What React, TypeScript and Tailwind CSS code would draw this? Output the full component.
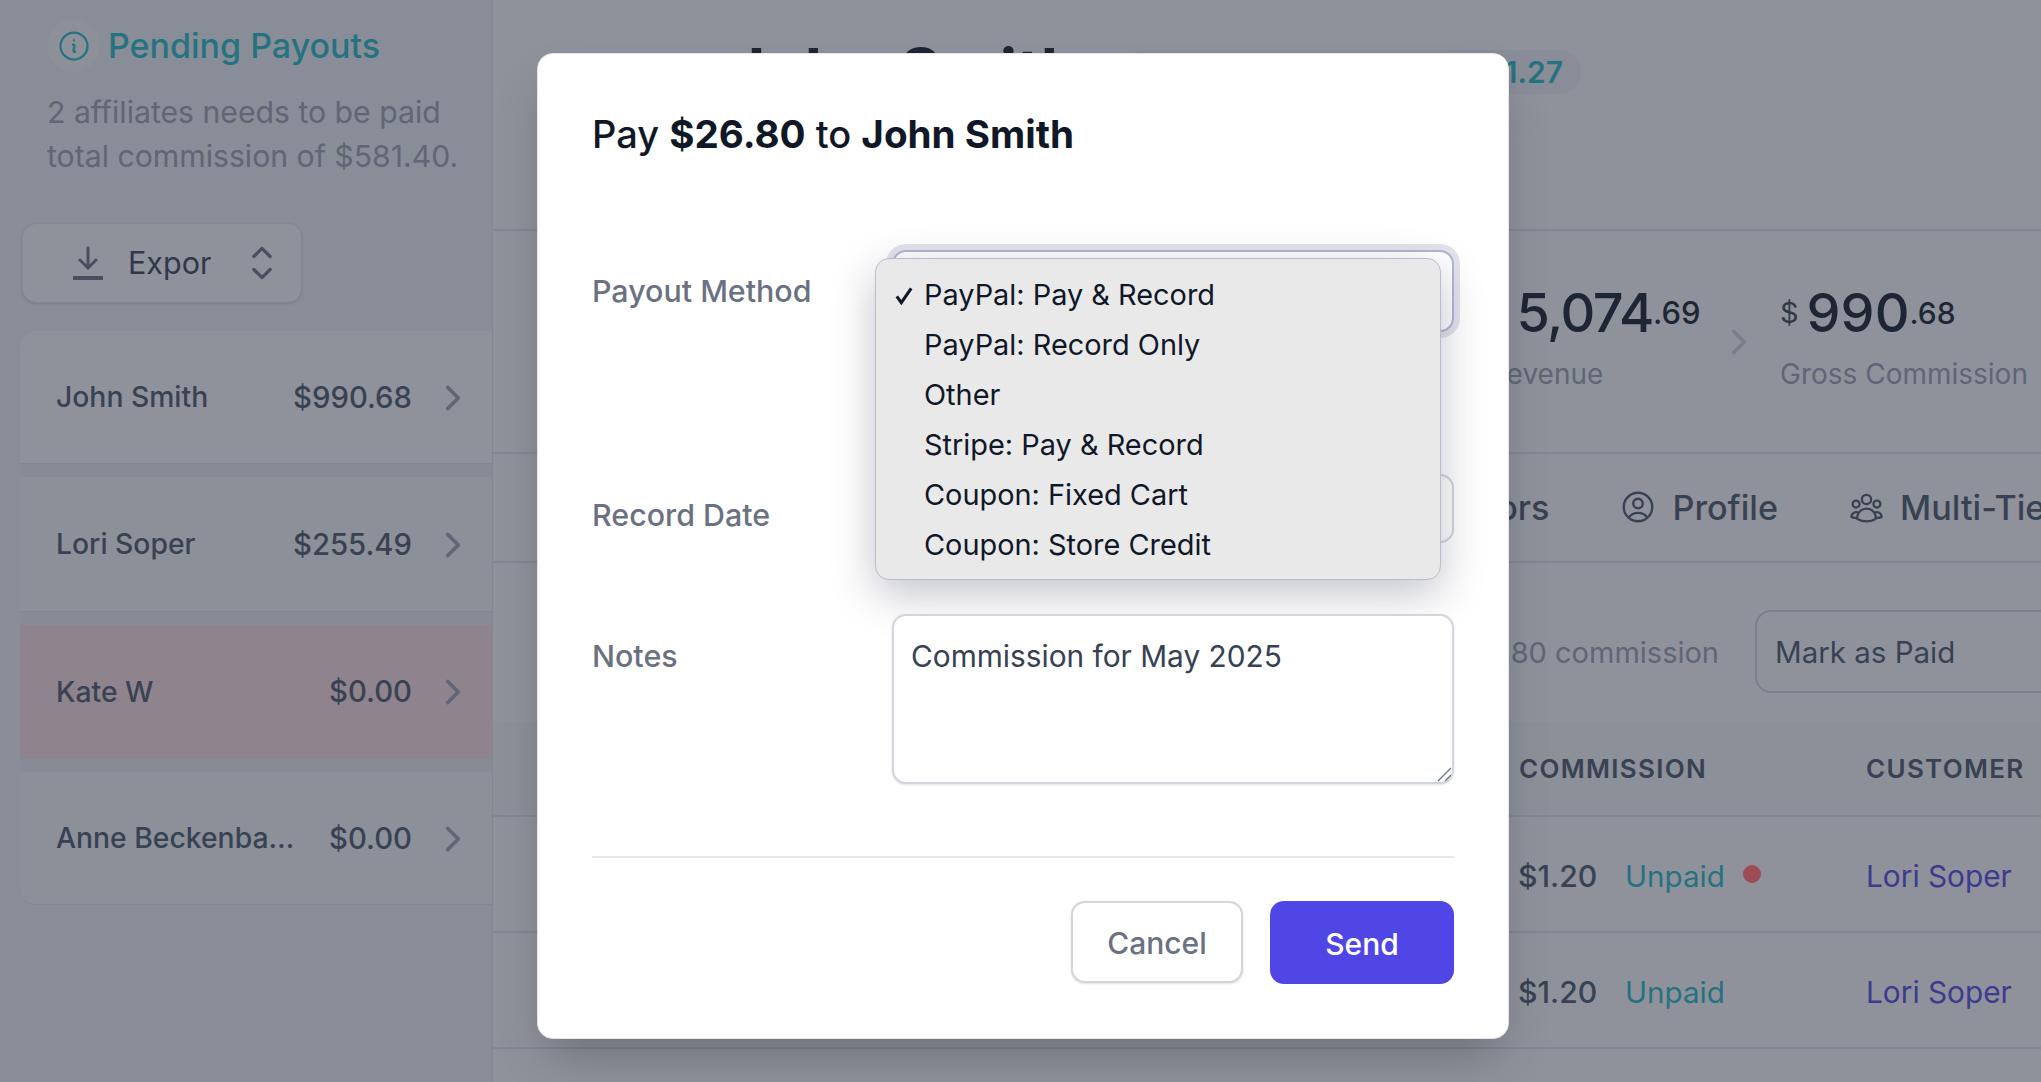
import React from "react";
import {
  HiOutlineInformationCircle,
  HiOutlineChevronRight,
  HiOutlineChevronUpDown,
  HiOutlineUserCircle,
  HiOutlineUserGroup,
} from "react-icons/hi2";

const people = [
  { name: "John Smith", amount: "$990.68", cls: "bg-white h-[133px] rounded-tl-2xl" },
  { name: "Lori Soper", amount: "$255.49", cls: "bg-gray-50 h-[135px]" },
  { name: "Kate W", amount: "$0.00", cls: "bg-red-100 h-[134px]" },
  { name: "Anne Beckenbauer", amount: "$0.00", cls: "bg-gray-50 h-[133px] rounded-bl-2xl" },
];

const options = [
  "PayPal: Pay & Record",
  "PayPal: Record Only",
  "Other",
  "Stripe: Pay & Record",
  "Coupon: Fixed Cart",
  "Coupon: Store Credit",
];

function Sidebar() {
  return (
    <aside className="w-[493px] shrink-0 h-full bg-gray-100 border-r border-gray-200 pl-[20px]">
      <div className="pl-[27px] pt-[19px]">
        <div className="flex items-center gap-[8px]">
          <div className="w-[53px] h-[53px] rounded-full bg-[#fafafa] flex items-center justify-center">
            <HiOutlineInformationCircle className="w-[36px] h-[36px] text-[#1ebcc6]" />
          </div>
          <span className="text-[34px] leading-[44px] font-medium text-[#1ebcc6]">Pending Payouts</span>
        </div>
        <p className="mt-[18px] text-[30.2px] leading-[44px] text-gray-400">
          2 affiliates needs to be paid
          <br />
          total commission of $581.40.
        </p>
      </div>
      <div className="mt-[45px] w-[280px] h-[80px] ml-[2px] rounded-[14px] bg-white border border-gray-200 shadow-sm flex items-center pl-[50px]">
        <svg viewBox="0 0 30 34" className="w-[30px] h-[34px] text-gray-500" fill="none" stroke="currentColor" strokeWidth="3" strokeLinecap="round" strokeLinejoin="round">
          <path d="M15 2v20M7 14l8 8 8-8" />
          <path d="M0 32h30" strokeWidth="4" strokeLinecap="butt" />
        </svg>
        <span className="ml-[25px] w-[83px] overflow-hidden whitespace-nowrap text-[30.5px] text-gray-700">Export</span>
        <HiOutlineChevronUpDown className="ml-[25px] w-[52px] h-[52px] text-gray-500 shrink-0" />
      </div>
      <div className="mt-[28px] bg-[#eff0f3] flex flex-col gap-[13px] rounded-l-2xl">
        {people.map((p) => (
          <div key={p.name} className={`${p.cls} flex items-center pl-[36px] pr-[22px] pt-[1px] border-b border-gray-200`}>
            <span className="min-w-0 flex-1 max-w-[240px] truncate text-[28.3px] font-medium text-gray-600">{p.name}</span>
            <span className="ml-auto shrink-0 text-[29.3px] font-medium text-gray-600 whitespace-nowrap">{p.amount}</span>
            <HiOutlineChevronRight className="ml-[24px] w-[34px] h-[34px] text-gray-400 shrink-0" strokeWidth={2.5} />
          </div>
        ))}
      </div>
    </aside>
  );
}

function Main() {
  return (
    <main className="flex-1 min-w-0 h-full bg-white flex flex-col overflow-hidden">
      <header className="h-[231px] shrink-0 border-b-2 border-gray-200 flex items-start pt-[37px] pl-[235px]">
        <span className="w-[346px] shrink-0 text-[64px] leading-[70px] font-bold text-gray-900 whitespace-nowrap">John Smith</span>
        <span className="ml-[49px] mt-[13px] w-[458px] h-[44px] shrink-0 rounded-full bg-gray-100 flex items-center justify-end pr-[18px] text-[30px] font-semibold text-[#1ebcc6]">$1,191.27</span>
      </header>
      <section className="h-[223px] shrink-0 border-b-2 border-gray-200 flex items-start pl-[991px] pt-[50px]">
        <div className="w-[238px] shrink-0">
          <div className="h-[64px] flex items-center whitespace-nowrap">
            <span className="text-[29px] text-gray-700 mr-[14px]">$</span>
            <span className="text-[54px] leading-[64px] font-medium text-gray-900 tracking-[-1.5px]">5,074</span>
            <span className="text-[31px] font-medium text-gray-900">.69</span>
          </div>
          <div className="mt-[8px] ml-[5px] text-[28px] text-gray-400">Revenue</div>
        </div>
        <HiOutlineChevronRight className="mt-[44px] w-[34px] h-[34px] text-gray-300 shrink-0" strokeWidth={2.5} />
        <div className="ml-[24px] shrink-0">
          <div className="h-[64px] flex items-center whitespace-nowrap">
            <span className="text-[29px] text-gray-700 mr-[8px]">$</span>
            <span className="text-[54px] leading-[64px] font-medium text-gray-900">990</span>
            <span className="text-[30px] font-medium text-gray-900">.68</span>
          </div>
          <div className="mt-[8px] text-[28px] text-gray-400 whitespace-nowrap">Gross Commission</div>
        </div>
      </section>
      <nav className="h-[109px] shrink-0 border-b-2 border-gray-200 flex items-center pl-[933px] gap-[70px] whitespace-nowrap text-[34.2px] font-medium text-gray-600">
        <span>Visitors</span>
        <span className="flex items-center gap-[15px]">
          <HiOutlineUserCircle className="w-[38px] h-[38px]" />
          Profile
        </span>
        <span className="flex items-center gap-[15px]">
          <HiOutlineUserGroup className="w-[37px] h-[37px]" />
          Multi-Tier
        </span>
      </nav>
      <div className="h-[159px] shrink-0 flex items-start pt-[47px] pl-[796px] whitespace-nowrap">
        <span className="w-[430px] shrink-0 h-[83px] pt-[2px] flex items-center justify-end text-[29px] text-gray-400">$26.80 commission</span>
        <div className="ml-[36px] w-[400px] h-[83px] pt-[2px] shrink-0 rounded-[16px] border-2 border-gray-300 flex items-center pl-[18px] text-[29.5px] text-gray-600">Mark as Paid</div>
      </div>
      <div className="h-[95px] shrink-0 bg-gray-50 border-b-2 border-gray-200 flex items-center pl-[1026px] whitespace-nowrap text-[26px] font-semibold tracking-wider text-gray-600">
        <span className="w-[347px]">COMMISSION</span>
        <span>CUSTOMER</span>
      </div>
      {[true, false].map((dot, i) => (
        <div key={i} className="h-[116px] shrink-0 border-b-2 border-gray-200 flex items-center pt-[5px] pl-[1025px] whitespace-nowrap text-[29.6px]">
          <span className="w-[107px] text-gray-600 font-medium text-[30.2px]">$1.20</span>
          <span className="w-[241px] flex items-center text-[#1ebcc6]">
            Unpaid
            {dot && <span className="relative z-20 ml-[18px] -mt-[4px] w-[18px] h-[18px] rounded-full bg-[#9e4c58]" />}
          </span>
          <span className="text-[#4f46e5] text-[29.8px]">Lori Soper</span>
        </div>
      ))}
    </main>
  );
}

function Modal() {
  return (
    <div className="absolute z-30 left-[537px] top-[53px] w-[972px] h-[986px] bg-white rounded-[16px] border border-gray-200 shadow-2xl pl-[54px] pr-[54px] pt-[58px]">
      <h2 className="text-[38px] leading-[44px] font-medium text-gray-900 whitespace-nowrap">
        Pay <span className="font-bold text-[38.6px]">$26.80</span> to <span className="font-bold text-[38.6px]">John Smith</span>
      </h2>
      <div className="relative mt-[94px] flex items-start">
        <label className="w-[300px] pt-[21px] text-[30.4px] leading-[40px] font-medium text-gray-500">Payout Method</label>
        <div className="flex-1 h-[82px] rounded-[14px] border-2 border-[#b3b6d2] bg-white ring-[6px] ring-[#e2e3ec]" />
        <div className="absolute left-[283px] top-[8px] w-[566px] h-[322px] rounded-[14px] border border-[#b9bcd0] bg-[#e9e9ea] shadow-[0_14px_44px_rgba(40,44,70,0.28)] pt-[11px]">
          {options.map((o, i) => (
            <div key={o} className="h-[50px] flex items-center pl-[48px] relative text-[28.9px] text-gray-900 whitespace-nowrap">
              {i === 0 && (
                <svg viewBox="0 0 20 20" className="absolute left-[19px] top-[16px] w-[18px] h-[19px]" fill="none" stroke="currentColor" strokeWidth="3.4">
                  <path d="M2 11l5 7L18 2" />
                </svg>
              )}
              {o}
            </div>
          ))}
        </div>
      </div>
      <div className="mt-[142px] flex items-start">
        <label className="w-[300px] pt-[21px] text-[30.4px] leading-[40px] font-medium text-gray-500">Record Date</label>
        <div className="flex-1 h-[69px] rounded-[14px] border-2 border-gray-300 bg-white" />
      </div>
      <div className="mt-[71px] flex items-start">
        <label className="w-[300px] pt-[22px] text-[30.4px] leading-[40px] font-medium text-gray-500">Notes</label>
        <div className="relative flex-1 h-[170px]">
          <textarea
            readOnly
            defaultValue="Commission for May 2025"
            className="block w-full h-full rounded-[14px] border-2 border-gray-300 bg-white px-[17px] pt-[20px] text-[29.8px] leading-[40px] text-gray-700 shadow-sm outline-none resize-none"
          />
          <svg viewBox="0 0 15 15" className="absolute right-[2px] bottom-[2px] w-[15px] h-[15px] text-gray-500" fill="none" stroke="currentColor" strokeWidth="1.2">
            <path d="M1 14L14 1M8 14l6-6" />
          </svg>
        </div>
      </div>
      <div className="mt-[72px] border-t-2 border-gray-200 flex justify-end gap-[27px] pt-[43px]">
        <button className="w-[172px] h-[82px] pt-[3px] rounded-[14px] border-2 border-gray-300 bg-white text-[30px] font-medium text-gray-500 shadow-sm">Cancel</button>
        <button className="w-[184px] h-[83px] pt-[3px] rounded-[14px] bg-[#4f46e5] text-[30px] font-medium text-white">Send</button>
      </div>
    </div>
  );
}

export default function App() {
  return (
    <div className="relative w-[2041px] h-[1082px] overflow-hidden flex font-['Inter',sans-serif]">
      <Sidebar />
      <Main />
      <div className="absolute inset-0 z-10 bg-[#2b3242]/[.53]" />
      <Modal />
    </div>
  );
}
